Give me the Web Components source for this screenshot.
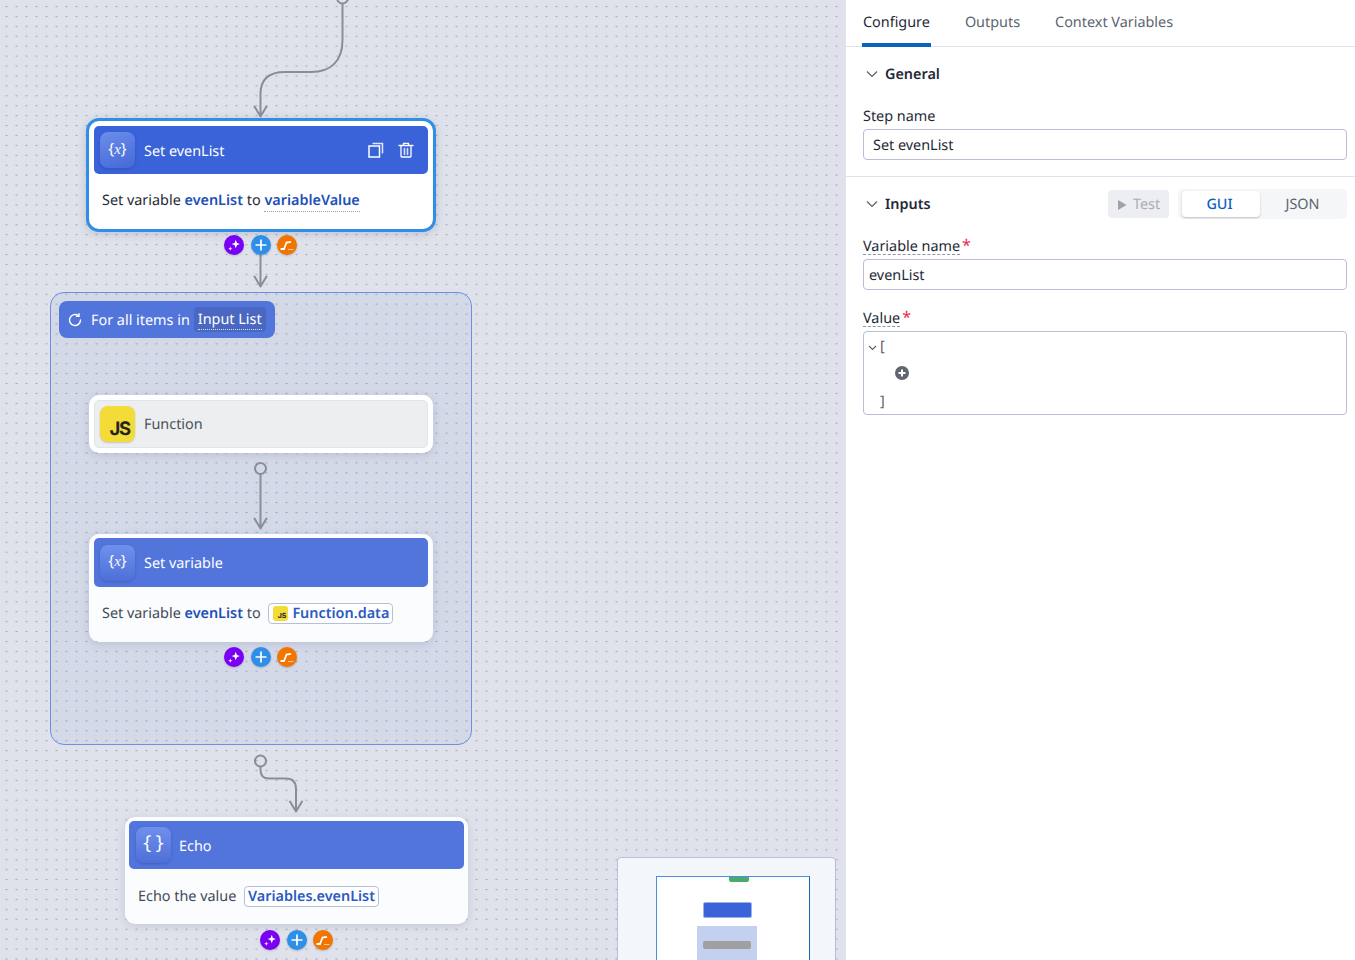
<!DOCTYPE html>
<html lang="en"><head><meta charset="utf-8"><title>Workflow</title>
<style>
html,body{margin:0;padding:0;height:100%;overflow:hidden;background:#fff}
body{font:14.4px/20px "Noto Sans",sans-serif;color:#1f2a37;text-rendering:geometricPrecision}
</style></head>
<body>
<flow-app>
  <flow-canvas slot="canvas">
    <flow-links></flow-links>
    <flow-step selected title="Set evenList" icon="var" style="left:86px;top:118px;width:350px;height:114px;--ty:2px;--by:2px">Set variable <var-ref>evenList</var-ref> to <var-ref dotted>variableValue</var-ref></flow-step>
    <flow-actions style="left:224px;top:235px"></flow-actions>
    <loop-group style="left:50px;top:292px;width:422px;height:453px"></loop-group>
    <flow-step disabled title="Function" icon="js" style="left:89px;top:395px;width:344px;height:58px"></flow-step>
    <flow-step faded title="Set variable" icon="var" style="left:89px;top:534px;width:344px;height:108px;--bh:52px">Set variable <var-ref>evenList</var-ref> to <var-chip js>Function.data</var-chip></flow-step>
    <flow-actions style="left:224px;top:647px"></flow-actions>
    <flow-step faded title="Echo" icon="echo" style="left:125px;top:817px;width:343px;height:107px;--hh:48px;--hp:7px;--hg:8px;--bp:9px;--px:4px;--ty:2px">Echo the value <var-chip>Variables.evenList</var-chip></flow-step>
    <flow-actions style="left:260px;top:930px"></flow-actions>
    <mini-map></mini-map>
  </flow-canvas>
  <side-panel slot="panel"></side-panel>
</flow-app>
<template id="t-step">
  <style>
    :host{position:absolute;box-sizing:border-box;display:block;background:#fbfcfe;border-radius:10px;padding:4px var(--px,5px);box-shadow:0 2px 8px rgba(60,70,110,.16);color:#414b57;font-size:14.4px}
    :host([selected]){background:#fff;border:3px solid #2f8fe8;border-radius:13px;padding:5px;color:#1f2a37;box-shadow:0 2px 8px rgba(60,70,110,.2)}
    :host([disabled]){background:#fff;padding:5px}
    .head{display:flex;align-items:center;height:var(--hh,49px);box-sizing:border-box;padding:0 var(--hp,6px);background:#5275dc;border-radius:5px;color:#fff;gap:var(--hg,9px)}
    :host([selected]) .head{height:48px;background:#3a62d9}
    :host([disabled]) .head{height:48px;background:#edeef0;border:1px solid #e2e4e8;padding:0 5px;color:#4a525c}
    .tile{width:35px;height:36px;flex:none;border-radius:8px;background:linear-gradient(180deg,#6f90ec,#4d70d8);box-shadow:0 1px 3px rgba(30,50,120,.3);display:flex;align-items:center;justify-content:center;color:#f8faff;box-sizing:border-box}
    :host([selected]) .tile{background:linear-gradient(160deg,#6c8dea,#4468d8)}
    .tile.js{background:#f3dc38;box-shadow:0 1px 2px rgba(0,0,0,.18);color:#24241f;font:700 18.5px/1 Inter,sans-serif;align-items:flex-end;justify-content:flex-end;padding:0 5px 4px 0;letter-spacing:-1.2px}
    .x{font:15.5px/1 "Noto Sans",sans-serif;position:relative;top:-1px;white-space:nowrap}
    .x i{font:italic 15px/1 "Liberation Serif",serif}
    .brace{font:18px/1 "DejaVu Sans Mono",monospace;font-weight:400;position:relative;top:-1px;letter-spacing:-4.6px;margin-right:4.600px;white-space:pre}
    .title{flex:1;white-space:nowrap;position:relative;top:var(--ty,1px)}
    .tools{display:flex;gap:14px;margin-right:8px}
    .tools svg{display:block}
    .body{display:flex;align-items:center;padding:0 var(--bp,8px);height:var(--bh,54px)}
    .body div{white-space:pre;line-height:20px;padding-top:var(--by,2px)}
    :host([selected]) .body{height:52px}
  </style>
  <div class="head"><span class="tile"></span><span class="title"></span><span class="tools"></span></div>
  <div class="body"><div><slot></slot></div></div>
</template>
<script>
const tpl=(html)=>{const t=document.createElement('template');t.innerHTML=html;return t;};
const def=(name,html,init)=>{const t=tpl(html);customElements.define(name,class extends HTMLElement{
  constructor(){super();this.attachShadow({mode:'open'}).appendChild(t.content.cloneNode(true));}
  connectedCallback(){init&&init.call(this,this.shadowRoot);}
});};

def('flow-app',`<style>:host{display:flex;width:1355px;height:960px;overflow:hidden}
  ::slotted([slot=canvas]){flex:0 0 845px}::slotted([slot=panel]){flex:1 1 0;min-width:0}</style>
  <slot name="canvas"></slot><slot name="panel"></slot>`);

def('flow-canvas',`<style>:host{display:block;position:relative;height:960px;overflow:hidden;background-color:#dfe2ea;
  background-image:radial-gradient(ellipse 1.3px 1px at 6.5px 6.5px,#a9adba 60%,transparent 100%);background-size:10px 9.93px}</style><slot></slot>`);

def('flow-links',`<style>:host{position:absolute;inset:0;z-index:3;pointer-events:none;display:block}
  svg{display:block}path,circle{fill:none;stroke:#8a8d99;stroke-width:2;stroke-linecap:round;stroke-linejoin:round}</style>
  <svg width="845" height="960" viewBox="0 0 845 960" aria-hidden="true">
    <circle cx="342.5" cy="-2" r="5.5"/>
    <path d="M342.5 4V40C342.5 61 331 72 311 72H285C268 72 260.5 80 260.5 94V116M254.5 106.500L260.500 116.500L266.500 106.500"/>
    <path d="M260.500 255V286M254.500 276.500L260.500 286.500L266.500 276.500"/>
    <circle cx="260.500" cy="468.500" r="5.500"/>
    <path d="M260.500 474V528M254.500 518.500L260.500 528.500L266.500 518.500"/>
    <circle cx="260.500" cy="761" r="5.500"/>
    <path d="M260.500 767V770C260.500 776 264 778.500 269 778.500H286C292.500 778.500 296 782 296 789V811M290 801.500L296 811.500L302 801.500"/>
  </svg>`);

def('loop-group',`<style>:host{position:absolute;box-sizing:border-box;display:block;border:1px solid #6e8de4;border-radius:14px;background:rgba(90,120,215,.08);padding:8px}
  .bar{display:inline-flex;align-items:center;height:37px;box-sizing:border-box;width:216px;padding:0 9px;background:#5275dc;border-radius:8px;color:#fff;font-size:14.4px;white-space:nowrap}
  svg{margin-right:9px;flex:none}
  .t{position:relative;top:1px}
  .chip{margin-left:4px;height:25px;line-height:26px;background:#4a68c2;border-radius:4px;padding:0 4px}
  .chip span{display:inline-block;height:20px;line-height:22px;border-bottom:1px dotted #d8e0f8}</style>
  <div class="bar"><svg width="14" height="14" viewBox="0 0 14 14" fill="none" stroke="#fff" stroke-width="1.400" stroke-linecap="round" stroke-linejoin="round"><path d="M12.500 7A5.500 5.500 0 1 1 10.500 2.800"/><path d="M11 .8V3.400H8.500"/></svg><span class="t">For all items in</span><span class="chip"><span>Input List</span></span></div>`);

customElements.define('flow-step',class extends HTMLElement{
  constructor(){super();this.attachShadow({mode:'open'}).appendChild(document.getElementById('t-step').content.cloneNode(true));}
  connectedCallback(){
    const s=this.shadowRoot;
    if(this.hasAttribute('title')){s.querySelector('.title').textContent=this.getAttribute('title');this.removeAttribute('title');}
    const v=this.getAttribute('icon'),tile=s.querySelector('.tile');
    if(v==='js'){tile.classList.add('js');tile.textContent='JS';s.querySelector('.body').style.display='none';}
    if(v==='var'){tile.innerHTML='<span class="x">{<i>x</i>}</span>';}
    if(v==='echo'){tile.innerHTML='<span class="brace">{ }</span>';}
    if(this.hasAttribute('selected')){
      s.querySelector('.tools').innerHTML=`<svg width="16" height="16" viewBox="0 0 16 16" fill="none" stroke="#fff" stroke-width="1.500"><rect x="1" y="4" width="10.500" height="11"/><path d="M4.500 1.500H14.500V11.500" stroke-opacity=".85"/></svg><svg width="16" height="16" viewBox="0 0 16 16" fill="none" stroke="#fff" stroke-width="1.300" stroke-linecap="round"><path d="M1 3.500H15M5.500 3V1.300H10.500V3M3 4V14.300Q3 15 3.800 15H12.200Q13 15 13 14.300V4"/><path d="M6.500 6.500V12.500M9.500 6.500V12.500" stroke-width="1.600" stroke-opacity=".8"/></svg>`;
    }
  }
});

def('var-ref',`<style>:host{display:inline;color:#1d50b8;font-weight:600}
  span{display:inline-block;line-height:20px}
  :host([dotted]) span{border-bottom:1px dotted #9aa3b8;line-height:19px;height:20px}</style><span><slot></slot></span>`);

def('var-chip',`<style>:host{display:inline-flex;align-items:center;vertical-align:middle;position:relative;top:-1px;height:21px;box-sizing:border-box;margin-left:4px;padding:0 3px;border:1px solid #b4bfdc;border-radius:4px;background:#fff;color:#2a5ac2;font-weight:600;gap:4px}
  .tx{position:relative;top:1px}
  .j{display:none;width:15px;height:15px;border-radius:3px;background:#f3dc38;color:#24241f;font:700 7px/1 Inter,sans-serif;align-items:flex-end;justify-content:flex-end;box-sizing:border-box;padding:0 2px 2px 0}
  :host([js]) .j{display:flex}
  :host([js]){padding-left:4px}</style><span class="j">JS</span><span class="tx"><slot></slot></span>`);

def('flow-actions',`<style>:host{position:absolute;display:flex;gap:6.500px;z-index:4}
  span{width:20px;height:20px;border-radius:50%;display:flex;align-items:center;justify-content:center;box-shadow:0 1px 2px rgba(40,50,90,.25)}
  .a{background:#7a00f5}.b{background:#2f8fe8}.c{background:#f27500}</style>
  <span class="a"><svg width="14" height="14" viewBox="0 0 12 12" fill="#fff"><path d="M7.500 1.500L8.500 4.200L11 5.200L8.500 6.200L7.500 8.800L6.500 6.200L4 5.200L6.500 4.200Z"/><path d="M2.800 7.300L3.300 8.700L4.700 9.200L3.300 9.700L2.800 11L2.300 9.700L1 9.200L2.300 8.700Z"/></svg></span>
  <span class="b"><svg width="12" height="12" viewBox="0 0 12 12" stroke="#fff" stroke-width="1.700" stroke-linecap="round"><path d="M6 1.200V10.800M1.200 6H10.800"/></svg></span>
  <span class="c"><svg width="16" height="12" viewBox="0 0 16 12" fill="none" stroke="#fff" stroke-width="1.800"><path d="M1.500 10H5L7.500 3.500L12 2.800"/><path d="M9 10.500H14.500" stroke-width="1" stroke-opacity=".6"/></svg></span>`);

def('mini-map',`<style>:host{position:absolute;left:617px;top:857px;width:219px;height:130px;box-sizing:border-box;display:block;background:#f3f7fb;border:1px solid #bac1d6;border-radius:4px;padding:18px 25px 0 38px;z-index:5}
  .view{position:relative;box-sizing:border-box;width:154px;height:120px;background:#fff;border:1px solid #4a90d9;border-right-color:#1763b0;display:flex;flex-direction:column;align-items:flex-start}
  .g{position:absolute;left:72px;top:0;width:20px;height:5px;background:#4aa96c;border-radius:0 0 2px 2px}
  .b1{margin:25px 0 0 46px;width:49px;height:16px;background:#3a62d9;border:1px solid #9db0ec;box-sizing:border-box;border-radius:2px}
  .loop{margin:8px 0 0 40px;width:60px;height:60px;background:#c4d0f0;box-sizing:border-box;padding:15px 6px 0}
  .f{height:8px;background:#a0a0a0;border-radius:2px}.s{height:8px;margin:11px 1px 0;background:#9aaee8}</style>
  <div class="view"><div class="g"></div><div class="b1"></div><div class="loop"><div class="f"></div><div class="s"></div></div></div>`);

def('panel-section',`<style>:host{display:block;border-bottom:1px solid #dfe2ec;padding:0 8px 0 17px}
  .head{display:flex;align-items:center;height:var(--h,54px);padding:0}
  svg{margin:0 7px 0 3px;flex:none}
  h3{margin:0;padding-top:2px;font:600 14.4px/20px "Noto Sans",sans-serif;color:#1f2a37;flex:1}
  :host([last]){border-bottom:0}</style>
  <div class="head"><svg width="12" height="12" viewBox="0 0 12 12" fill="none" stroke="#59616d" stroke-width="1.200"><path d="M1 3.500L6 8.500L11 3.500"/></svg><h3></h3><slot name="tools"></slot></div><slot></slot>`,function(s){s.querySelector('h3').textContent=this.getAttribute('heading');});

def('form-label',`<style>:host{display:block;line-height:20px;color:#1f2a37;height:20px}
  span{display:inline-block;line-height:20px;height:17px;padding-top:1px}
  :host([hint]) span{border-bottom:1px dashed #8f96a3}
  b{color:#e8274b;font-weight:400;margin-left:2px;font-size:16px;line-height:16px}</style><span><slot></slot></span><b></b>`,function(s){if(this.hasAttribute('required'))s.querySelector('b').textContent='*';});

def('text-box',`<style>:host{display:block;box-sizing:border-box;height:31px;line-height:31px;border:1px solid #b8bed4;border-radius:4px;background:#fff;padding:0 var(--px,9px);color:#1f2a37}</style><slot></slot>`);

def('json-box',`<style>:host{display:block;box-sizing:border-box;height:84px;border:1px solid #b8bed4;border-radius:4px;background:#fff;color:#59616d;position:relative}
  .l{display:flex;align-items:center;height:20px;font-size:14.4px}
  .o{margin-top:5px;padding-left:4px}.p{margin-top:5px;height:22px;padding-left:31px}.c{margin-top:8px;padding-left:16px}
  svg{display:block;flex:none}</style>
  <div class="l o"><svg width="9" height="9" viewBox="0 0 9 9" fill="none" stroke="#59616d" stroke-width="1.100" style="margin-right:3px"><path d="M1 3L4.500 6.500L8 3"/></svg>[</div>
  <div class="l p"><svg width="14" height="14" viewBox="0 0 14 14"><circle cx="7" cy="7" r="7" fill="#5f6672"/><path d="M7 3.500V10.500M3.500 7H10.500" stroke="#fff" stroke-width="2"/></svg></div>
  <div class="l c">]</div>`);

def('side-panel',`<style>:host{display:block;box-sizing:border-box;height:960px;background:#fff;border-left:1px solid #e0e3ee;font-size:14.4px}
  nav{display:flex;height:47px;box-sizing:border-box;border-bottom:1px solid #dfe2ec;padding-left:16px;gap:33px}
  nav a{display:block;height:47px;box-sizing:border-box;padding:13px 1px 0;color:#5c6570;line-height:20px}
  nav a.on{color:#1f2a37;border-bottom:4px solid #0b62c1}
  .gen form-label{margin-top:5px;margin-bottom:3px}
  .gen text-box{margin-bottom:16px}
  .test{display:flex;align-items:center;gap:6px;width:61px;height:28px;box-sizing:border-box;padding:2px 0 0 9px;background:#eceef1;border-radius:4px;color:#a9adb3;font-size:14.4px}
  .tools{display:flex;gap:9px;align-items:center}
  .seg{display:flex;width:169px;height:30px;box-sizing:border-box;padding:2px 0 0 4px;background:#f5f6f8;border-radius:5px;color:#5c6570;text-align:center}
  .seg span{flex:1;line-height:28px;height:26px;padding-right:2px;box-sizing:border-box}
  .seg .on{flex:0 0 78px;background:#fff;border-radius:4px;box-shadow:0 1px 2px rgba(40,50,80,.28);color:#0b62c1;font-weight:500;padding-right:3px}
  .inp form-label:first-of-type{margin-top:5px}
  .inp form-label{margin-bottom:3px}
  .inp{--px:5px}
  .gap{height:18px}
  </style>
  <nav><a class="on">Configure</a><a>Outputs</a><a>Context Variables</a></nav>
  <panel-section class="gen" heading="General"><form-label>Step name</form-label><text-box>Set evenList</text-box></panel-section>
  <panel-section class="inp" heading="Inputs" last>
    <div slot="tools" class="tools"><span class="test"><svg width="10" height="10" viewBox="0 0 10 10" fill="#9da2a9"><path d="M1 0L9.500 5L1 10Z"/></svg>Test</span><div class="seg"><span class="on">GUI</span><span>JSON</span></div></div>
    <form-label required hint>Variable name</form-label><text-box>evenList</text-box><div class="gap"></div>
    <form-label required hint>Value</form-label><json-box></json-box>
  </panel-section>`);
</script>
</body></html>
